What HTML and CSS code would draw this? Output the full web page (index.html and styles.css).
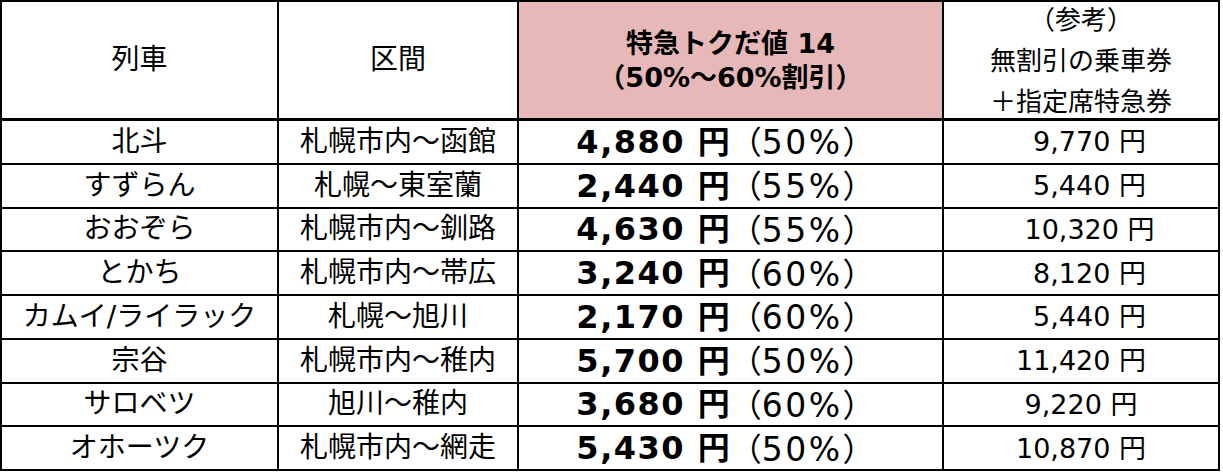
FILE: index.html
```html
<!DOCTYPE html>
<html lang="ja">
<head>
<meta charset="utf-8">
<title>特急トクだ値 14</title>
<link rel="stylesheet" href="styles.css">
</head>
<body>
<div class="sheet">
  <div class="cell head">列車</div>
  <div class="cell head">区間</div>
  <div class="cell head pink"><div class="hl">特急トクだ値 14</div><div class="hl">（50%～60%割引）</div></div>
  <div class="cell head ref"><div class="rl">（参考）</div><div class="rl">無割引の乗車券</div><div class="rl">＋指定席特急券</div></div>

  <div class="cell">北斗</div>
  <div class="cell">札幌市内～函館</div>
  <div class="cell price"><span class="amt">4,880 <span class="yen">円</span></span><span class="pct"><span class="par">（</span>50%<span class="par">）</span></span></div>
  <div class="cell fare shift">9,770 円</div>

  <div class="cell">すずらん</div>
  <div class="cell">札幌～東室蘭</div>
  <div class="cell price"><span class="amt">2,440 <span class="yen">円</span></span><span class="pct"><span class="par">（</span>55%<span class="par">）</span></span></div>
  <div class="cell fare shift">5,440 円</div>

  <div class="cell">おおぞら</div>
  <div class="cell">札幌市内～釧路</div>
  <div class="cell price"><span class="amt">4,630 <span class="yen">円</span></span><span class="pct"><span class="par">（</span>55%<span class="par">）</span></span></div>
  <div class="cell fare shift">10,320 円</div>

  <div class="cell">とかち</div>
  <div class="cell">札幌市内～帯広</div>
  <div class="cell price"><span class="amt">3,240 <span class="yen">円</span></span><span class="pct"><span class="par">（</span>60%<span class="par">）</span></span></div>
  <div class="cell fare shift">8,120 円</div>

  <div class="cell">カムイ/ライラック</div>
  <div class="cell">札幌～旭川</div>
  <div class="cell price"><span class="amt">2,170 <span class="yen">円</span></span><span class="pct"><span class="par">（</span>60%<span class="par">）</span></span></div>
  <div class="cell fare shift">5,440 円</div>

  <div class="cell">宗谷</div>
  <div class="cell">札幌市内～稚内</div>
  <div class="cell price"><span class="amt">5,700 <span class="yen">円</span></span><span class="pct"><span class="par">（</span>50%<span class="par">）</span></span></div>
  <div class="cell fare">11,420 円</div>

  <div class="cell">サロベツ</div>
  <div class="cell">旭川～稚内</div>
  <div class="cell price"><span class="amt">3,680 <span class="yen">円</span></span><span class="pct"><span class="par">（</span>60%<span class="par">）</span></span></div>
  <div class="cell fare">9,220 円</div>

  <div class="cell">オホーツク</div>
  <div class="cell">札幌市内～網走</div>
  <div class="cell price"><span class="amt">5,430 <span class="yen">円</span></span><span class="pct"><span class="par">（</span>50%<span class="par">）</span></span></div>
  <div class="cell fare">10,870 円</div>
</div>
</body>
</html>
```

FILE: styles.css
```css
html, body {
  margin: 0;
  padding: 0;
  background: #ffffff;
}

body {
  width: 1223px;
  height: 474px;
  overflow: hidden;
  font-family: "DejaVu Sans", "Noto Sans CJK JP", sans-serif;
  color: #000;
}

.sheet {
  display: grid;
  grid-template-columns: 275px 238px 423px 274px;
  grid-template-rows: 117px repeat(8, 41.75px);
  gap: 2px;
  padding: 2px;
  width: 1220px;
  box-sizing: border-box;
  background: #000;
}

.cell {
  background: #fff;
  display: flex;
  align-items: center;
  justify-content: center;
  font-size: 28px;
  line-height: 1;
  white-space: nowrap;
}

.head {
  margin-bottom: 1px;
  flex-direction: column;
}

.pink {
  background: #e6b8b7;
  font-weight: bold;
  font-size: 27px;
}

.hl {
  line-height: 34px;
}

.hl:first-child {
  margin-top: 2px;
}

.ref {
  font-size: 26px;
}

.rl {
  line-height: 41px;
}

.rl:first-child {
  margin-top: 2px;
}

.price {
  padding-right: 10px;
}

.amt {
  font-weight: bold;
  font-size: 32px;
  letter-spacing: 1.5px;
}

.amt .yen {
  letter-spacing: 0;
}

.pct {
  font-size: 33px;
  letter-spacing: 2.5px;
}

.par {
  font-family: "Noto Sans CJK JP", sans-serif;
  font-size: 32px;
  letter-spacing: 0;
}

.fare {
  font-size: 27px;
}

.shift {
  padding-left: 17px;
}
```
